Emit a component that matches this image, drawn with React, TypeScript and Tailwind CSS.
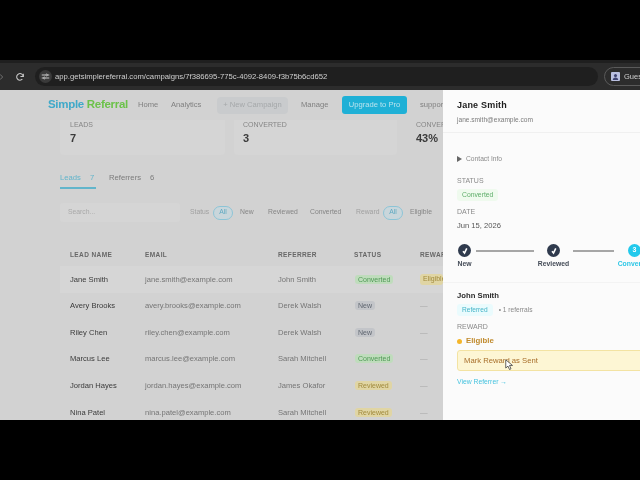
import React from "react";

const rows = [
  ["Jane Smith", "jane.smith@example.com", "John Smith", "Converted", "Eligible"],
  ["Avery Brooks", "avery.brooks@example.com", "Derek Walsh", "New", "—"],
  ["Riley Chen", "riley.chen@example.com", "Derek Walsh", "New", "—"],
  ["Marcus Lee", "marcus.lee@example.com", "Sarah Mitchell", "Converted", "—"],
  ["Jordan Hayes", "jordan.hayes@example.com", "James Okafor", "Reviewed", "—"],
  ["Nina Patel", "nina.patel@example.com", "Sarah Mitchell", "Reviewed", "—"],
];

function Badge({ label }: { label: string }) {
  const cls =
    label === "Converted"
      ? "bg-[#bfdcbc] text-[#4f9a55]"
      : label === "Reviewed"
        ? "bg-[#e0d5a4] text-[#a18a3c]"
        : "bg-[#c3c5c9] text-[#5f6670]";
  return <span className={`rounded-[3px] px-[3px] py-[1px] text-[7px] leading-[11px] ${cls}`}>{label}</span>;
}

function Step({ label, done, active }: { label: string; done?: boolean; active?: boolean }) {
  return (
    <div className="flex w-[13px] shrink-0 flex-col items-center">
      <div className={`flex h-[13px] w-[13px] shrink-0 items-center justify-center rounded-full text-[7px] font-bold text-white ${active ? "bg-[#22c9ec]" : "bg-[#2f3a4d]"}`}>
        {done ? (
          <svg viewBox="0 0 10 10" className="h-[8px] w-[8px]" fill="none" stroke="white" strokeWidth="2">
            <path d="M2.5 5.4 4.4 7.6 7.2 1.8" />
          </svg>
        ) : (
          "3"
        )}
      </div>
      <span className={`mt-[2px] whitespace-nowrap text-[6.8px] font-bold leading-[10px] ${active ? "text-[#2cc6e6]" : "text-[#444b57]"}`}>{label}</span>
    </div>
  );
}

export default function App() {
  return (
    <div className="flex h-[480px] w-[640px] flex-col overflow-hidden bg-black font-['Liberation_Sans',sans-serif]">
      <div className="h-[60px] shrink-0 bg-black" />
      {/* browser chrome */}
      <div className="h-[30px] shrink-0 overflow-hidden bg-[#2c2c2c]">
        <div className="flex h-[30px] items-center border-t-[3px] border-[#1f1f1f] blur-[0.4px]">
          <svg viewBox="0 0 6 10" className="h-[10px] w-[4px] shrink-0" fill="none" stroke="#777" strokeWidth="1.4">
            <path d="M0 1l4 4-4 4" />
          </svg>
          <svg viewBox="0 0 24 24" className="ml-[11px] h-[10px] w-[10px] shrink-0" fill="none" stroke="#c8c8c8" strokeWidth="2.5">
            <path d="M20 11a8 8 0 1 0-2.3 6.3" />
            <path d="M20 4v7h-7" />
          </svg>
          <div className="ml-[10px] flex h-[19px] w-[563px] shrink-0 items-center rounded-full bg-[#1f1f1f] pl-[4px]">
            <span className="flex h-[13px] w-[13px] shrink-0 items-center justify-center rounded-full bg-[#3a3a3a]">
              <svg viewBox="0 0 12 12" className="h-[9px] w-[9px]" fill="none" stroke="#d8d8d8" strokeWidth="1.2">
                <path d="M1 4h5M9 4h2M1 8h2M6 8h5" />
                <circle cx="7.5" cy="4" r="1.2" />
                <circle cx="4.5" cy="8" r="1.2" />
              </svg>
            </span>
            <span className="ml-[3px] whitespace-nowrap text-[7.7px] text-[#cfcfcf]">app.getsimplereferral.com/campaigns/7f386695-775c-4092-8409-f3b75b6cd652</span>
          </div>
          <div className="ml-[6px] flex h-[19px] w-[60px] shrink-0 items-center gap-[4px] rounded-l-full border border-[#5a5a5a] pl-[6px]">
            <span className="flex h-[9px] w-[9px] shrink-0 items-center justify-center rounded-[1px] bg-[#b9bfe0]">
              <svg viewBox="0 0 10 10" className="h-[9px] w-[9px]" fill="#3d4270">
                <circle cx="5" cy="4" r="1.7" />
                <path d="M2 9a3 3 0 0 1 6 0z" />
              </svg>
            </span>
            <span className="text-[7.5px] text-[#cfcfcf]">Guest</span>
          </div>
        </div>
      </div>

      <div className="relative flex h-[330px] shrink-0 overflow-hidden">
        {/* dimmed page */}
        <div className="h-full w-[443px] shrink-0 overflow-hidden bg-[#d2d2d2]">
          <div className="h-full w-[443px] blur-[0.55px]">
            {/* nav */}
            <div className="flex h-[30px] items-center whitespace-nowrap pl-[48px] text-[7.6px] text-[#808080]">
              <span className="w-[80px] shrink-0 text-[11.5px] font-bold tracking-[-0.3px]">
                <span className="text-[#3fa9c9]">Simple</span> <span className="text-[#6cc24a]">Referral</span>
              </span>
              <span className="ml-[10px] w-[20px] shrink-0">Home</span>
              <span className="ml-[13px] w-[30px] shrink-0">Analytics</span>
              <span className="ml-[16px] flex h-[17px] w-[71px] shrink-0 items-center justify-center rounded-[4px] bg-[#c9cbcd] text-[#a5a8aa]">+ New Campaign</span>
              <span className="ml-[13px] w-[28px] shrink-0">Manage</span>
              <span className="ml-[13px] flex h-[18px] w-[65px] shrink-0 items-center justify-center rounded-[3px] bg-[#1fb0d6] text-[#b7e3ee]">Upgrade to Pro</span>
              <span className="ml-[13px] shrink-0">support</span>
            </div>
            {/* cards */}
            <div className="flex h-[35px] pl-[60px]">
              <div className="h-full w-[165px] shrink-0 rounded-b-[4px] bg-[#d5d5d5] pl-[10px]">
                <div className="text-[7px] leading-[9px] text-[#858585]">LEADS</div>
                <div className="mt-[2px] text-[11px] font-bold leading-[14px] text-[#3b3b3b]">7</div>
              </div>
              <div className="ml-[9px] h-full w-[163px] shrink-0 rounded-b-[4px] bg-[#d5d5d5] pl-[9px]">
                <div className="text-[7px] leading-[9px] text-[#858585]">CONVERTED</div>
                <div className="mt-[2px] text-[11px] font-bold leading-[14px] text-[#3b3b3b]">3</div>
              </div>
              <div className="ml-[19px] h-full shrink-0">
                <div className="text-[7px] leading-[9px] text-[#858585]">CONVERSION</div>
                <div className="mt-[2px] text-[11px] font-bold leading-[14px] text-[#3b3b3b]">43%</div>
              </div>
            </div>
            {/* tabs */}
            <div className="ml-[60px] mt-[15px] flex h-[19px] items-start text-[7.7px] leading-[12px]">
              <div className="flex h-[19px] w-[36px] shrink-0 gap-[9px] border-b-[2px] border-[#62b5cb] pt-[2px] text-[#62b5cb]">
                <span>Leads</span>
                <span>7</span>
              </div>
              <div className="ml-[13px] flex gap-[9px] pt-[2px] text-[#7b7b7b]">
                <span>Referrers</span>
                <span>6</span>
              </div>
            </div>
            {/* filters */}
            <div className="ml-[60px] mt-[14px] flex h-[19px] items-center whitespace-nowrap text-[6.8px] text-[#858585]">
              <div className="flex h-[19px] w-[120px] shrink-0 items-center rounded-[3px] bg-[#d5d5d5] pl-[8px] text-[#a9a9a9]">Search...</div>
              <span className="ml-[10px] w-[19px] shrink-0 text-[#a0a0a0]">Status</span>
              <span className="ml-[4px] flex h-[14px] w-[20px] shrink-0 items-center justify-center rounded-full border border-[#8cc4d6] bg-[#c9d6db] text-[#5fa9c2]">All</span>
              <span className="ml-[7px] w-[14px] shrink-0">New</span>
              <span className="ml-[14px] w-[28px] shrink-0">Reviewed</span>
              <span className="ml-[14px] w-[31px] shrink-0">Converted</span>
              <span className="ml-[15px] w-[22px] shrink-0 text-[#a0a0a0]">Reward</span>
              <span className="ml-[5px] flex h-[14px] w-[20px] shrink-0 items-center justify-center rounded-full border border-[#8cc4d6] bg-[#c9d6db] text-[#5fa9c2]">All</span>
              <span className="ml-[7px] shrink-0">Eligible</span>
            </div>
            {/* table */}
            <div className="ml-[60px] mt-[21px] w-[383px]">
              <div className="grid h-[23px] grid-cols-[75px_133px_76px_66px_23px] items-center whitespace-nowrap pl-[10px] text-[6.5px] font-bold tracking-[0.4px] text-[#676767]">
                <span>LEAD NAME</span>
                <span>EMAIL</span>
                <span>REFERRER</span>
                <span>STATUS</span>
                <span>REWARD</span>
              </div>
              {rows.map((r, i) => (
                <div key={r[0]} className={`grid h-[26.6px] grid-cols-[75px_133px_76px_66px_23px] items-center whitespace-nowrap pl-[10px] text-[7.6px] text-[#757575] ${i === 0 ? "bg-[#d6d6d6]" : ""}`}>
                  <span className="text-[#3a3a3a]">{r[0]}</span>
                  <span>{r[1]}</span>
                  <span>{r[2]}</span>
                  <span className="pl-[1px]"><Badge label={r[3]} /></span>
                  {r[4] === "Eligible" ? (
                    <span className="rounded-[3px] bg-[#e0d5a4] px-[3px] text-[7px] text-[#a18a3c]">Eligible</span>
                  ) : (
                    <span className="text-[#a5a5a5]">—</span>
                  )}
                </div>
              ))}
            </div>
          </div>
        </div>

        {/* drawer */}
        <div className="h-full flex-1 overflow-hidden whitespace-nowrap bg-[#fbfbfb]">
          <div className="h-full blur-[0.35px]">
            <div className="h-[43px] border-b border-[#f0f0f0] pl-[14px] pt-[9px]">
              <div className="text-[9px] font-bold leading-[13px] tracking-[0.2px] text-[#1c1c1c]">Jane Smith</div>
              <div className="mt-[3px] text-[6.6px] leading-[10px] text-[#7c7c7c]">jane.smith@example.com</div>
            </div>
            <div className="pl-[14px]">
              <div className="mt-[20px] flex h-[12px] items-center gap-[4px] text-[6.7px] text-[#8a8a8a]">
                <span className="h-0 w-0 border-y-[3px] border-l-[5px] border-y-transparent border-l-[#666]" />
                Contact Info
              </div>
              <div className="mt-[11px] text-[7px] leading-[10px] text-[#8a8a8a]">STATUS</div>
              <div className="flex h-[18px] items-center">
                <span className="rounded-[3px] bg-[#effaee] px-[5px] text-[6.8px] leading-[12px] text-[#5fae6a]">Converted</span>
              </div>
              <div className="mt-[3px] text-[7px] leading-[10px] text-[#8a8a8a]">DATE</div>
              <div className="mt-[3px] text-[7.6px] leading-[12px] text-[#565656]">Jun 15, 2026</div>
              <div className="mt-[12px] flex h-[27px] w-[200px] items-start pl-[1px]">
                <Step label="New" done />
                <div className="ml-[5px] mt-[6px] h-[1.5px] w-[58px] shrink-0 bg-[#a6a6a6]" />
                <div className="ml-[13px]"><Step label="Reviewed" done /></div>
                <div className="ml-[13px] mt-[6px] h-[1.5px] w-[41px] shrink-0 bg-[#a6a6a6]" />
                <div className="ml-[14px]"><Step label="Converted" active /></div>
              </div>
            </div>
            <div className="mt-[11px] border-t border-[#f3f3f3] pl-[14px] pt-[7px]">
              <div className="text-[7.7px] font-bold leading-[12px] text-[#2c2c2c]">John Smith</div>
              <div className="mt-[2px] flex items-center gap-[6px] text-[6.6px] leading-[12px] text-[#8a8a8a]">
                <span className="rounded-[3px] bg-[#eafbfd] px-[5px] text-[#45b4c8]">Referred</span>
                <span>• 1 referrals</span>
              </div>
              <div className="mt-[6px] text-[7px] leading-[10px] text-[#8a8a8a]">REWARD</div>
              <div className="mt-[3px] flex items-center gap-[4px] text-[7.8px] font-bold leading-[12px] text-[#c08a2c]">
                <span className="h-[5px] w-[5px] rounded-full bg-[#f5b62a]" />
                Eligible
              </div>
              <div className="mt-[3px] flex h-[21px] w-[200px] items-center rounded-[3px] border border-[#f3e3a2] bg-[#fdf6d4] pl-[6px] text-[7.7px] text-[#a86f2b]">
                Mark Reward as Sent
              </div>
              <div className="mt-[6px] text-[6.8px] leading-[10px] text-[#45c3df]">View Referrer →</div>
            </div>
          </div>
        </div>

        {/* mouse pointer */}
        <svg viewBox="0 0 12 16" className="absolute left-[505px] top-[269px] h-[12px] w-[9px]" fill="#fff" stroke="#333" strokeWidth="1">
          <path d="M1 1v11l3-2.5 2 4.5 2-1-2-4.4h4z" />
        </svg>
      </div>
      <div className="flex-1 bg-black" />
    </div>
  );
}
